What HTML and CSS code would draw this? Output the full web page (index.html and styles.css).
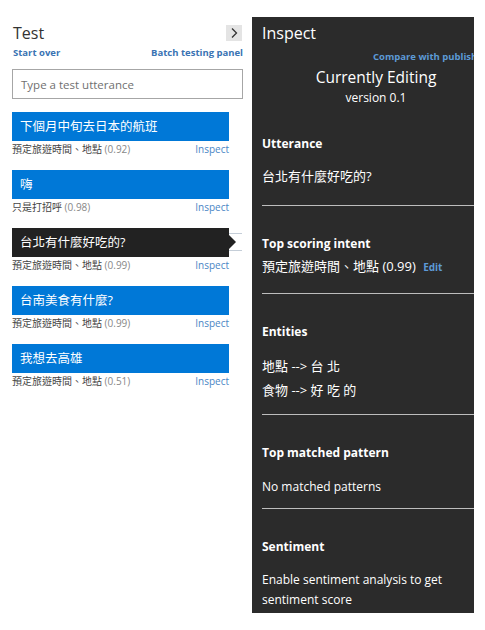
FILE: index.html
```html
<!DOCTYPE html>
<html>
<head>
<meta charset="utf-8">
<link rel="stylesheet" href="styles.css">
</head>
<body>
<div class="page">
  <div class="test">
    <div class="test-head">
      <span class="test-title">Test</span>
      <span class="collapse"><svg width="16" height="16" viewBox="0 0 16 16"><path d="M6 3.5 L10.5 8 L6 12.5" fill="none" stroke="#333" stroke-width="1.3"/></svg></span>
    </div>
    <div class="test-links">
      <span>Start over</span>
      <span>Batch testing panel</span>
    </div>
    <div class="input">Type a test utterance</div>
    <div class="items">
      <div class="item">
        <div class="utt">下個月中旬去日本的航班</div>
        <div class="meta"><span class="intent">預定旅遊時間、地點 <span class="score">(0.92)</span></span><span class="inspect">Inspect</span></div>
      </div>
      <div class="item">
        <div class="utt">嗨</div>
        <div class="meta"><span class="intent">只是打招呼 <span class="score">(0.98)</span></span><span class="inspect">Inspect</span></div>
      </div>
      <div class="item">
        <div class="utt active">台北有什麼好吃的?</div>
        <div class="meta"><span class="intent">預定旅遊時間、地點 <span class="score">(0.99)</span></span><span class="inspect">Inspect</span></div>
      </div>
      <div class="item">
        <div class="utt">台南美食有什麼?</div>
        <div class="meta"><span class="intent">預定旅遊時間、地點 <span class="score">(0.99)</span></span><span class="inspect">Inspect</span></div>
      </div>
      <div class="item">
        <div class="utt">我想去高雄</div>
        <div class="meta"><span class="intent">預定旅遊時間、地點 <span class="score">(0.51)</span></span><span class="inspect">Inspect</span></div>
      </div>
    </div>
  </div>
  <div class="inspect-panel">
    <div class="ip-title">Inspect</div>
    <div class="compare">Compare with published</div>
    <div class="editing">
      <div class="editing-title">Currently Editing</div>
      <div class="editing-version">version 0.1</div>
    </div>
    <div class="section s-utt">
      <div class="sec-head">Utterance</div>
      <div class="sec-body cjk">台北有什麼好吃的?</div>
    </div>
    <div class="section s-intent">
      <div class="sec-head">Top scoring intent</div>
      <div class="sec-body cjk">預定旅遊時間、地點 (0.99) <span class="edit">Edit</span></div>
    </div>
    <div class="section s-ent">
      <div class="sec-head">Entities</div>
      <div class="sec-body cjk">
        <div>地點 --&gt; 台 北</div>
        <div>食物 --&gt; 好 吃 的</div>
      </div>
    </div>
    <div class="section s-pat">
      <div class="sec-head">Top matched pattern</div>
      <div class="sec-body">No matched patterns</div>
    </div>
    <div class="section s-sent">
      <div class="sec-head">Sentiment</div>
      <div class="sec-body">Enable sentiment analysis to get<br>sentiment score</div>
    </div>
  </div>
</div>
</body>
</html>
```
FILE: styles.css
```css
html, body {
  margin: 0;
  padding: 0;
  background: #fff;
}
body {
  font-family: "Open Sans", "Noto Sans CJK TC", sans-serif;
  color: #222;
}
.page {
  display: flex;
  align-items: flex-start;
}
.test {
  width: 231px;
  margin-left: 12px;
  padding-top: 22px;
}
.test-head {
  display: flex;
  justify-content: space-between;
  align-items: center;
  height: 22px;
}
.test-title {
  font-size: 16px;
  line-height: 22px;
  color: #333;
  margin-left: 1px;
}
.collapse {
  width: 16px;
  height: 16px;
  background: #e4e4e4;
  margin-right: 1px;
  display: flex;
}
.test-links {
  display: flex;
  justify-content: space-between;
  margin-top: 2px;
  font-size: 9.5px;
  line-height: 14px;
  font-weight: 700;
  color: #3a73b3;
  padding-left: 1px;
}
.input {
  margin-top: 9px;
  height: 28px;
  border: 1px solid #a6a6a6;
  font-size: 11.5px;
  line-height: 29px;
  padding-left: 8px;
  color: #707070;
}
.items {
  margin-top: 13px;
  display: flex;
  flex-direction: column;
  gap: 12px;
}
.item {
  width: 217px;
}
.utt {
  height: 29px;
  background: #0078d7;
  color: #fff;
  font-size: 12.5px;
  line-height: 29px;
  padding-left: 8px;
  position: relative;
}
.utt.active {
  background: #222;
}
.utt.active::after {
  content: "";
  position: absolute;
  left: 217px;
  top: 7px;
  border-top: 7.5px solid transparent;
  border-bottom: 7.5px solid transparent;
  border-left: 7px solid #222;
}
.utt.active::before {
  content: "";
  position: absolute;
  left: 217px;
  top: 5px;
  width: 13px;
  height: 16px;
  border-top: 1px solid #c5ced8;
  border-bottom: 1px solid #c5ced8;
}
.meta {
  display: flex;
  justify-content: space-between;
  height: 17px;
  font-size: 10px;
  line-height: 17px;
}
.intent {
  color: #444;
}
.score {
  color: #888;
}
.inspect {
  color: #4a86c5;
}
.inspect-panel {
  margin-left: 9px;
  margin-top: 17px;
  width: 222px;
  height: 596px;
  background: #2b2b2b;
  color: #fff;
  overflow: hidden;
  padding-top: 5px;
  box-sizing: border-box;
}
.ip-title {
  font-size: 16px;
  line-height: 22px;
  padding-left: 10px;
}
.compare {
  margin-top: 6px;
  padding-left: 121px;
  font-size: 9.5px;
  line-height: 14px;
  font-weight: 700;
  color: #5d9ad6;
  white-space: nowrap;
}
.editing {
  margin-right: -26px;
  text-align: center;
  margin-top: 2px;
}
.editing-title {
  font-size: 15.5px;
  line-height: 22px;
}
.editing-version {
  font-size: 12px;
  line-height: 16px;
  margin-top: 2px;
}
.section {
  margin-left: 10px;
  padding-top: 30px;
  border-bottom: 1px solid #bdbdbd;
}
.section.s-utt {
  padding-top: 30px;
}
.section.s-sent {
  border-bottom: none;
}
.sec-head {
  font-size: 12px;
  line-height: 16px;
  font-weight: 700;
}
.sec-body {
  font-size: 12px;
  line-height: 20px;
}
.sec-body.cjk {
  font-size: 13px;
}
.s-utt .sec-body {
  margin-top: 14px;
  padding-bottom: 19px;
}
.s-intent .sec-body {
  margin-top: 4px;
  padding-bottom: 17px;
}
.s-ent .sec-body {
  margin-top: 14px;
  line-height: 24px;
  padding-bottom: 12px;
}
.s-pat .sec-body {
  margin-top: 16px;
  padding-bottom: 11px;
}
.s-sent .sec-body {
  margin-top: 15px;
}
.edit {
  font-size: 10px;
  line-height: 10px;
  font-weight: 700;
  color: #5d9ad6;
  margin-left: 4px;
}
```
